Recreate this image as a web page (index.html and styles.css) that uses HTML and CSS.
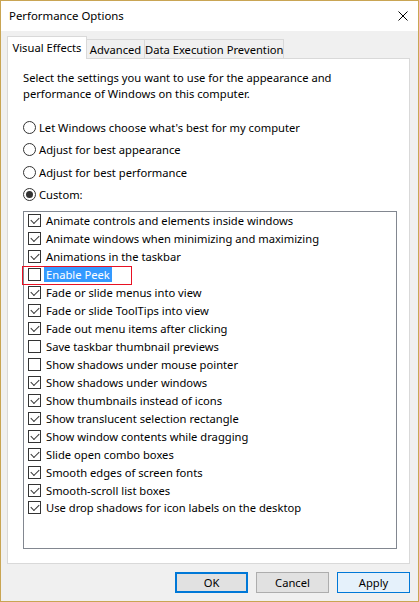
FILE: index.html
```html
<!DOCTYPE html>
<html>
<head>
<meta charset="utf-8">
<link rel="stylesheet" href="styles.css">
</head>
<body>
<div class="window">
  <div class="titlebar">
    <span class="title">Performance Options</span>
    <span class="close"><svg width="10" height="10" viewBox="0 0 10 10"><path d="M0.5 0.5L9.5 9.5M9.5 0.5L0.5 9.5" stroke="#000" stroke-width="1" fill="none"/></svg></span>
  </div>
  <div class="content">
    <div class="tabs">
      <div class="tab tab-selected tab-ve">Visual Effects</div>
      <div class="tab tab-adv">Advanced</div>
      <div class="tab tab-dep">Data Execution Prevention</div>
    </div>
    <div class="panel">
      <p class="intro">Select the settings you want to use for the appearance and performance of Windows on this computer.</p>
      <div class="radios">
        <div class="radio-row"><span class="radio"></span><span>Let Windows choose what's best for my computer</span></div>
        <div class="radio-row"><span class="radio"></span><span>Adjust for best appearance</span></div>
        <div class="radio-row"><span class="radio"></span><span>Adjust for best performance</span></div>
        <div class="radio-row"><span class="radio radio-on"></span><span>Custom:</span></div>
      </div>
      <div class="listbox">
        <div class="item"><span class="cb on"></span><span class="label">Animate controls and elements inside windows</span></div>
        <div class="item"><span class="cb on"></span><span class="label">Animate windows when minimizing and maximizing</span></div>
        <div class="item"><span class="cb on"></span><span class="label">Animations in the taskbar</span></div>
        <div class="item item-marked"><span class="cb"></span><span class="label label-sel">Enable Peek</span><span class="mark"></span></div>
        <div class="item"><span class="cb on"></span><span class="label">Fade or slide menus into view</span></div>
        <div class="item"><span class="cb on"></span><span class="label">Fade or slide ToolTips into view</span></div>
        <div class="item"><span class="cb on"></span><span class="label">Fade out menu items after clicking</span></div>
        <div class="item"><span class="cb"></span><span class="label">Save taskbar thumbnail previews</span></div>
        <div class="item"><span class="cb"></span><span class="label">Show shadows under mouse pointer</span></div>
        <div class="item"><span class="cb on"></span><span class="label">Show shadows under windows</span></div>
        <div class="item"><span class="cb on"></span><span class="label">Show thumbnails instead of icons</span></div>
        <div class="item"><span class="cb on"></span><span class="label">Show translucent selection rectangle</span></div>
        <div class="item"><span class="cb on"></span><span class="label">Show window contents while dragging</span></div>
        <div class="item"><span class="cb on"></span><span class="label">Slide open combo boxes</span></div>
        <div class="item"><span class="cb on"></span><span class="label">Smooth edges of screen fonts</span></div>
        <div class="item"><span class="cb on"></span><span class="label">Smooth-scroll list boxes</span></div>
        <div class="item"><span class="cb on"></span><span class="label">Use drop shadows for icon labels on the desktop</span></div>
      </div>
    </div>
    <div class="buttons">
      <button class="btn btn-default">OK</button>
      <button class="btn">Cancel</button>
      <button class="btn btn-apply">Apply</button>
    </div>
  </div>
</div>
</body>
</html>
```

FILE: styles.css
```css
html, body {
  margin: 0;
  padding: 0;
  background: #ffffff;
}
body {
  font-family: "Noto Sans", "Open Sans", sans-serif;
  font-size: 11.2px;
  color: #000;
}
.window {
  width: 419px;
  height: 602px;
  box-sizing: border-box;
  border: 1px solid #c9a553;
  background: #f0f0f0;
  display: flex;
  flex-direction: column;
}
.titlebar {
  height: 30px;
  background: #ffffff;
  display: flex;
  align-items: center;
  justify-content: space-between;
  padding-left: 8px;
}
.title {
  font-size: 11.4px;
  line-height: 16px;
}
.close {
  width: 30px;
  height: 30px;
  display: flex;
  align-items: center;
  justify-content: center;
}
.close svg {
  display: block;
}
.content {
  flex: 1;
  padding: 5px 8px 0 6px;
  display: flex;
  flex-direction: column;
}
.tabs {
  height: 22px;
  display: flex;
  align-items: flex-end;
  position: relative;
  z-index: 1;
}
.tab {
  box-sizing: border-box;
  height: 19px;
  border: 1px solid #d9d9d9;
  border-bottom: none;
  background: #f0f0f0;
  text-align: center;
  line-height: 15px;
  padding-top: 2px;
  white-space: nowrap;
  margin-left: -1px;
}
.tab-ve {
  width: 80px;
  margin-left: 0;
}
.tab-adv {
  width: 59px;
}
.tab-dep {
  width: 140px;
}
.tab-selected {
  height: 23px;
  margin-bottom: -1px;
  background: #ffffff;
  padding-top: 3px;
  position: relative;
  z-index: 2;
}
.panel {
  box-sizing: border-box;
  height: 506px;
  border: 1px solid #d9d9d9;
  background: #ffffff;
  padding: 11px 12px 0 15px;
}
.intro {
  margin: 0;
  line-height: 16px;
  padding-right: 20px;
}
.radios {
  margin-top: 14px;
}
.radio-row {
  height: 22.5px;
  display: flex;
  align-items: center;
}
.radio {
  box-sizing: border-box;
  width: 13px;
  height: 13px;
  border: 1px solid #333333;
  border-radius: 50%;
  background: #ffffff;
  margin-right: 3px;
  display: flex;
  align-items: center;
  justify-content: center;
  flex: none;
}
.radio-on::after {
  content: "";
  width: 7px;
  height: 7px;
  border-radius: 50%;
  background: #333333;
}
.listbox {
  box-sizing: border-box;
  margin-top: 5px;
  height: 338px;
  border: 1px solid #828790;
  background: #ffffff;
  padding: 0 0 0 4px;
}
.item {
  height: 17.95px;
  display: flex;
  align-items: center;
  position: relative;
}
.cb {
  box-sizing: border-box;
  width: 13px;
  height: 13px;
  border: 1px solid #333333;
  background: #ffffff;
  margin-right: 3px;
  flex: none;
  position: relative;
}
.cb.on::after {
  content: "";
  position: absolute;
  left: 2px;
  top: 0px;
  width: 7px;
  height: 4px;
  border-left: 1px solid #333333;
  border-bottom: 1px solid #333333;
  transform: translate(0px, 2px) rotate(-45deg);
  transform-origin: center;
}
.label {
  padding: 0 2px;
  line-height: 15px;
  white-space: nowrap;
}
.label-sel {
  background: #3399ff;
  color: #ffffff;
}
.mark {
  position: absolute;
  left: -6px;
  top: 0;
  width: 110px;
  height: 19px;
  box-sizing: border-box;
  border: 1px solid #e81123;
}
.buttons {
  margin-top: 8px;
  display: flex;
  justify-content: flex-end;
  gap: 8px;
}
.btn {
  box-sizing: border-box;
  width: 73px;
  height: 21px;
  border: 1px solid #adadad;
  background: #e1e1e1;
  font-family: "Noto Sans", "Open Sans", sans-serif;
  font-size: 11.2px;
  color: #000;
  padding: 0;
  line-height: 17px;
}
.btn-default {
  border: 2px solid #0078d7;
}
.btn-apply {
  border: 1px solid #0078d7;
  background: #e5f1fb;
}
```
